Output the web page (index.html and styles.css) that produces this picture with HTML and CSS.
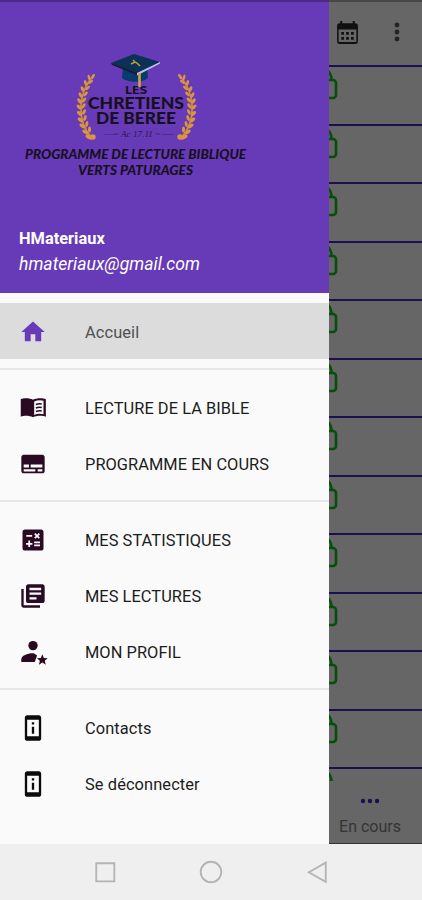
FILE: index.html
```html
<!DOCTYPE html>
<html lang="fr">
<head>
    <meta charset="UTF-8">
    <meta name="viewport" content="width=device-width, initial-scale=1.0">
    <title>Les Chrétiens de Bérée</title>
    <link rel="stylesheet" href="styles.css">
</head>
<body>
    <!-- Shared icons -->
    <svg class="sprite" width="0" height="0">
        <symbol id="lock" viewBox="0 0 26 32">
            <path d="M5 12V8a7.500 7 0 0 1 11-5c2 1.500 3 4 3.500 8M2 12h19a3 3 0 0 1 3 3v12a3 3 0 0 1-3 3H2z" fill="none" stroke="currentColor" stroke-width="2.600"/>
        </symbol>
        <symbol id="info" viewBox="0 0 24 24">
            <path d="M11 11h2v6h-2zM11 7h2v2h-2zM17 1H7c-1.100 0-2 .9-2 2v18c0 1.100.9 2 2 2h10c1.100 0 2-.9 2-2V3c0-1.100-.9-2-2-2zm0 18H7V5h10z" fill-rule="evenodd"/>
        </symbol>
        <symbol id="laurel" viewBox="0 0 22 70">
            <path d="M17 3C2 20 0 48 16 65" fill="none" stroke="#c98a45" stroke-width="1.800"/>
            <g fill="#d9953f">
                <ellipse cx="17" cy="3.500" rx="1.300" ry="3" transform="rotate(30 17 3.500)"/>
                <ellipse cx="13" cy="4.500" rx="1.300" ry="3" transform="rotate(-15 13 4.500)"/>
                <ellipse cx="14.500" cy="9" rx="1.300" ry="3" transform="rotate(55 14.500 9)"/>
                <ellipse cx="9.500" cy="10" rx="1.400" ry="3" transform="rotate(-20 9.500 10)"/>
                <ellipse cx="11.500" cy="15" rx="1.400" ry="3" transform="rotate(50 11.500 15)"/>
                <ellipse cx="6.500" cy="16" rx="1.500" ry="3" transform="rotate(-25 6.500 16)"/>
                <ellipse cx="9.500" cy="21" rx="1.400" ry="3" transform="rotate(45 9.500 21)"/>
                <ellipse cx="4.500" cy="22" rx="1.500" ry="3" transform="rotate(-30 4.500 22)"/>
                <ellipse cx="8" cy="27" rx="1.500" ry="3" transform="rotate(40 8 27)"/>
                <ellipse cx="3.500" cy="28" rx="1.600" ry="3" transform="rotate(-35 3.500 28)"/>
                <ellipse cx="7.500" cy="33" rx="1.500" ry="3" transform="rotate(35 7.500 33)"/>
                <ellipse cx="3" cy="34" rx="1.600" ry="3" transform="rotate(-40 3 34)"/>
                <ellipse cx="8" cy="39" rx="1.500" ry="3" transform="rotate(28 8 39)"/>
                <ellipse cx="3.500" cy="40.500" rx="1.700" ry="3.100" transform="rotate(-45 3.500 40.500)"/>
                <ellipse cx="9" cy="45" rx="1.500" ry="3" transform="rotate(20 9 45)"/>
                <ellipse cx="4.500" cy="47" rx="1.700" ry="3.200" transform="rotate(-50 4.500 47)"/>
                <ellipse cx="10.800" cy="51" rx="1.500" ry="3" transform="rotate(10 10.800 51)"/>
                <ellipse cx="6.500" cy="53" rx="1.800" ry="3.400" transform="rotate(-55 6.500 53)"/>
                <ellipse cx="13.500" cy="56.500" rx="1.500" ry="3" transform="rotate(0 13.500 56.500)"/>
                <ellipse cx="9.500" cy="59" rx="1.800" ry="3.500" transform="rotate(-58 9.500 59)"/>
                <ellipse cx="13" cy="64" rx="2" ry="3.800" transform="rotate(-62 13 64)"/>
                <circle cx="17" cy="64" r="2.700"/>
            </g>
        </symbol>
    </svg>

    <div class="screen">
        <!-- Reading list behind the drawer -->
        <main class="app">
            <header class="toolbar">
                <svg class="calendar" viewBox="0 0 22 24">
                    <path d="M3.500 3H4V1h2v2h10V1h2v2h.5A2.500 2.500 0 0 1 21 5.500v15a2.500 2.500 0 0 1-2.500 2.500h-15A2.500 2.500 0 0 1 1 20.500v-15A2.500 2.500 0 0 1 3.500 3zM2.500 9v12h17V9z" fill-rule="evenodd"/>
                    <path d="M5 11.500h2.600v2.600H5zM9.700 11.500h2.600v2.600H9.700zM14.400 11.500H17v2.600h-2.600zM5 16.300h2.600v2.600H5zM9.700 16.300h2.600v2.600H9.700zM14.400 16.300H17v2.600h-2.600z"/>
                </svg>
                <svg class="more" viewBox="0 0 6 20">
                    <circle cx="3" cy="3" r="2.400"/><circle cx="3" cy="10" r="2.400"/><circle cx="3" cy="17" r="2.400"/>
                </svg>
            </header>
            <ul class="days">
                <li><svg class="lock"><use href="#lock"/></svg></li>
                <li><svg class="lock"><use href="#lock"/></svg></li>
                <li><svg class="lock"><use href="#lock"/></svg></li>
                <li><svg class="lock"><use href="#lock"/></svg></li>
                <li><svg class="lock"><use href="#lock"/></svg></li>
                <li><svg class="lock"><use href="#lock"/></svg></li>
                <li><svg class="lock"><use href="#lock"/></svg></li>
                <li><svg class="lock"><use href="#lock"/></svg></li>
                <li><svg class="lock"><use href="#lock"/></svg></li>
                <li><svg class="lock"><use href="#lock"/></svg></li>
                <li><svg class="lock"><use href="#lock"/></svg></li>
                <li><svg class="lock"><use href="#lock"/></svg></li>
                <li><svg class="lock"><use href="#lock"/></svg></li>
            </ul>
            <div class="tabs">
                <div class="tab">
                    <svg class="dots" viewBox="0 0 20 6">
                        <circle cx="3" cy="3" r="2.200"/><circle cx="10" cy="3" r="2.200"/><circle cx="17" cy="3" r="2.200"/>
                    </svg>
                    <span>En cours</span>
                </div>
            </div>
        </main>

        <!-- Drawer -->
        <aside class="drawer">
            <div class="profile">
                <svg class="logo" viewBox="0 0 240 132">
                    <use href="#laurel" x="56" y="24" width="22" height="70"/>
                    <use href="#laurel" x="-177" y="24" width="22" height="70" transform="scale(-1 1)"/>
                    <g class="logo-title">
                        <text x="105" y="44.500" font-size="12" textLength="22" lengthAdjust="spacingAndGlyphs">LES</text>
                        <text x="68" y="60" font-size="16.500" textLength="96" lengthAdjust="spacingAndGlyphs">CHRETIENS</text>
                        <text x="76" y="75" font-size="16.500" textLength="80" lengthAdjust="spacingAndGlyphs">DE BEREE</text>
                    </g>
                    <path d="M103 18l-1 11c6 5 20 5 26 0l-1-12z" fill="#073a6d"/>
                    <path d="M91 14l23-9 26 8-23 12z" fill="#0b3157"/>
                    <path d="M91 14l26 10v2L92 16z" fill="#1c1931"/>
                    <path d="M117 24l23-11v1.500L117 26.500z" fill="#bcc5e6"/>
                    <path d="M111 15l4-2 2 1 3 3M115 13l-2-2" fill="none" stroke="#b9a03f" stroke-width="1.500"/>
                    <path d="M119.500 24v14" stroke="#cda34a" stroke-width="2.600"/>
                    <path d="M84 85.500h12M142 85.500h12" stroke="#4a2b83" stroke-width="0.800"/>
                    <text class="logo-verse" x="94" y="88" textLength="46">~ Ac 17.11 ~</text>
                    <g class="logo-motto">
                        <text x="5" y="110" textLength="221" lengthAdjust="spacingAndGlyphs">PROGRAMME DE LECTURE BIBLIQUE</text>
                        <text x="58" y="125.500" textLength="115" lengthAdjust="spacingAndGlyphs">VERTS PATURAGES</text>
                    </g>
                </svg>
                <strong class="name">HMateriaux</strong>
                <em class="email">hmateriaux@gmail.com</em>
            </div>
            <nav class="menu">
                <div class="group">
                    <a class="item active">
                        <svg viewBox="0 0 24 24"><path d="M10 20v-6h4v6h5v-8h3L12 3 2 12h3v8z"/></svg>
                        <span>Accueil</span>
                    </a>
                </div>
                <div class="group">
                    <a class="item plum">
                        <svg viewBox="0 0 24 24">
                            <path d="M1.500 4.500C4 3.300 9 3.300 12 5c3-1.700 8-1.700 11-.5v15c-3-1.200-8-1.200-11 .5-3-1.700-8-1.700-10.500-.5zM13 6.500v11.500c2.500-1.200 5.500-1.300 8-.6V5.800c-2.500-.8-5.500-.5-8 .7z" fill-rule="evenodd"/>
                            <path d="M14.500 9c1.700-.7 3.300-.8 5-.5M14.500 12c1.700-.7 3.300-.8 5-.5M14.500 15c1.700-.7 3.300-.8 5-.5" fill="none" stroke="currentColor" stroke-width="1.300"/>
                        </svg>
                        <span>LECTURE DE LA BIBLE</span>
                    </a>
                    <a class="item plum">
                        <svg viewBox="0 0 24 24"><path d="M20 4H4c-1.100 0-2 .9-2 2v12c0 1.100.9 2 2 2h16c1.100 0 2-.9 2-2V6c0-1.100-.9-2-2-2zM4 12.500h4.500V15H4zm10 6H4v-2h10zm6 0h-4v-2h4zm0-3.500H10v-2.500h10z"/></svg>
                        <span>PROGRAMME EN COURS</span>
                    </a>
                </div>
                <div class="group">
                    <a class="item plum">
                        <svg viewBox="0 0 24 24"><path d="M19 3H5c-1.100 0-2 .9-2 2v14c0 1.100.9 2 2 2h14c1.100 0 2-.9 2-2V5c0-1.100-.9-2-2-2zm-5.970 4.060L14.090 6l1.410 1.410L16.910 6l1.060 1.060-1.410 1.410 1.410 1.410-1.060 1.060-1.410-1.400-1.410 1.410-1.060-1.060 1.410-1.410zM6.250 7.720h5v1.500h-5zM11.500 16h-2v2H8v-2H6v-1.500h2v-2h1.500v2h2zm6.500 1.250h-5v-1.500h5zm0-2.500h-5v-1.500h5z"/></svg>
                        <span>MES STATISTIQUES</span>
                    </a>
                    <a class="item plum">
                        <svg viewBox="0 0 24 24"><path d="M4 6H2v14c0 1.100.9 2 2 2h14v-2H4zM20 2H8c-1.100 0-2 .9-2 2v12c0 1.100.9 2 2 2h12c1.100 0 2-.9 2-2V4c0-1.100-.9-2-2-2zm-1 9H9V9h10zm-4 4H9v-2h6zm4-8H9V5h10z"/></svg>
                        <span>MES LECTURES</span>
                    </a>
                    <a class="item plum">
                        <svg viewBox="0 0 24 24">
                            <circle cx="12" cy="6.500" r="4"/>
                            <path d="M2 20.500v-2.200C2 15 8 12.800 13 13.200l2.500 1.800-2 5.500z"/>
                            <path d="M20 14l1.300 3.100 3.300.3-2.500 2.200.8 3.300-2.900-1.800-2.900 1.800.8-3.300-2.500-2.200 3.300-.3z"/>
                        </svg>
                        <span>MON PROFIL</span>
                    </a>
                </div>
                <div class="group">
                    <a class="item">
                        <svg><use href="#info"/></svg>
                        <span>Contacts</span>
                    </a>
                    <a class="item">
                        <svg><use href="#info"/></svg>
                        <span>Se déconnecter</span>
                    </a>
                </div>
            </nav>
        </aside>
    </div>

    <!-- System navigation bar -->
    <footer class="system-bar">
        <svg viewBox="0 0 24 24"><path d="M4.500 4.500h15.500v15.500h-15.500z"/></svg>
        <svg viewBox="0 0 24 24"><circle cx="12" cy="12" r="8.800"/></svg>
        <svg viewBox="0 0 24 24"><path d="M19.500 4v16.500L5 12.200z"/></svg>
    </footer>
</body>
</html>
```
FILE: styles.css
```css
* {
    box-sizing: border-box;
}

body {
    margin: 0;
    width: 422px;
    height: 900px;
    display: flex;
    flex-direction: column;
    font-family: Roboto, "Liberation Sans", sans-serif;
    overflow: hidden;
}

svg {
    display: block;
    fill: currentColor;
    flex: none;
    overflow: visible;
}

.sprite {
    position: absolute;
}

.screen {
    position: relative;
    height: 844px;
    overflow: hidden;
}

/* App behind the drawer, already dimmed */
.app {
    height: 100%;
    display: flex;
    flex-direction: column;
    background-color: #666;
    border-top: 2px solid #474747;
    border-bottom: 1px solid #333;
}

.toolbar {
    height: 63px;
    flex: none;
    display: flex;
    justify-content: flex-end;
    align-items: center;
    gap: 35px;
    padding: 0 22px 3px 0;
    color: #101012;
}

.calendar {
    width: 23px;
    height: 25px;
}

.more {
    width: 6px;
    height: 20px;
    color: #252525;
}

.days {
    flex: 1;
    min-height: 0;
    overflow: hidden;
    margin: 0;
    padding: 0;
    list-style: none;
}

.days li {
    height: 58.5px;
    padding: 1px 0 0 312px;
    border-top: 2px solid #1e0f50;
}

.lock {
    width: 26px;
    height: 32px;
    color: #064f0a;
}

.tabs {
    height: 62px;
    flex: none;
    display: flex;
    justify-content: flex-end;
    padding-right: 21px;
}

.tab {
    display: flex;
    flex-direction: column;
    align-items: center;
    padding-top: 17px;
    font-size: 16px;
    color: #343434;
}

.dots {
    width: 20px;
    height: 6px;
    margin-bottom: 13px;
    color: #1b1150;
}

/* Drawer */
.drawer {
    position: absolute;
    top: 0;
    left: 0;
    width: 329px;
    height: 100%;
    background-color: #fafafa;
}

.profile {
    height: 293px;
    display: flex;
    flex-direction: column;
    padding: 47px 19px 0;
    border-top: 2px solid #4a2a83;
    background-color: #673ab7;
    color: #fff;
}

.logo {
    width: 240px;
    height: 132px;
    margin: 0 0 47px 1px;
}

.logo-title {
    font-family: Lato, sans-serif;
    font-weight: 900;
    fill: #17101f;
}

.logo-verse {
    font-family: "Liberation Serif", serif;
    font-size: 9px;
    font-style: italic;
    fill: #2a1749;
}

.logo-motto {
    font-family: Lato, sans-serif;
    font-size: 12.5px;
    font-weight: 900;
    font-style: italic;
    fill: #17101f;
}

.name {
    font-size: 16.4px;
    line-height: 22px;
}

.email {
    font-size: 17.6px;
    line-height: 28px;
}

/* Menu */
.menu {
    padding-top: 10px;
}

.group + .group {
    margin-top: 9px;
    padding-top: 9px;
    border-top: 2px solid #e6e6e6;
}

.item {
    height: 56px;
    display: flex;
    align-items: center;
    gap: 38px;
    padding: 1px 19px 0;
    font-size: 16.4px;
    letter-spacing: 0.1px;
    color: #1c1c1c;
}

/* Caps labels run a little tighter than the mixed-case ones */
.item.plum {
    letter-spacing: 0.05px;
}

.item span {
    padding-top: 1px;
}

.item svg {
    width: 28px;
    height: 28px;
    color: #0c0a0c;
}

.item.plum svg {
    color: #2a0a22;
}

.item.active {
    background-color: #dcdcdc;
    color: #505050;
}

.item.active svg {
    color: #673ab7;
}

/* System bar */
.system-bar {
    height: 56px;
    display: flex;
    justify-content: center;
    align-items: center;
    gap: 78px;
    background-color: #efefef;
}

.system-bar svg {
    width: 28px;
    height: 28px;
    fill: none;
    stroke: #b4b4b4;
    stroke-width: 1.6;
}
```
